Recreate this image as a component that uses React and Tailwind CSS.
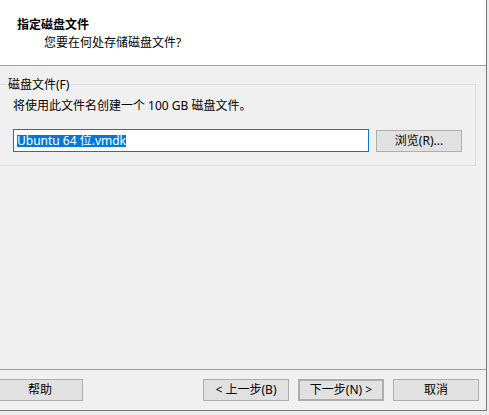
export default function App() {
  const font = "font-['Segoe_UI','Noto_Sans','Noto_Sans_CJK_SC',sans-serif]";
  const btn =
    "h-[22px] w-[86px] flex items-center justify-center bg-[#e1e1e1] border border-[#adadad] text-[12px] leading-[16px] text-black";
  return (
    <div className={`w-[489px] h-[415px] bg-[#ececec] overflow-hidden ${font}`}>
      <div className="w-[487px] h-[411px] border-r border-b border-[#7a7a7a] bg-[#f0f0f0] flex flex-col">
        <div className="h-[66px] bg-white border-b border-[#a0a0a0] pt-[16px] shrink-0">
          <div className="pl-[17px] text-[12px] leading-[16px] font-bold text-black font-['Noto_Sans_CJK_SC',sans-serif]">
            指定磁盘文件
          </div>
          <div className="pl-[44px] mt-[3px] text-[12px] leading-[16px] text-black">
            您要在何处存储磁盘文件?
          </div>
        </div>
        <div className="h-[304px] shrink-0 border-b border-[#a0a0a0]">
          <div className="relative mt-[18px] ml-[-2px] w-[478px] h-[82px] border border-[#dcdcdc] pl-[14px] pt-[13px]">
            <span className="absolute top-[-8px] left-[8px] px-px bg-[#f0f0f0] text-[12px] leading-[16px] text-black">
              磁盘文件(F)
            </span>
            <div className="text-[12px] leading-[16px] text-black">
              将使用此文件名创建一个 100 GB 磁盘文件。
            </div>
            <div className="flex items-center mt-[15px]">
              <div className="w-[356px] h-[23px] bg-white border border-[#0078d7] flex items-center pl-[3px]">
                <span className="bg-[#0078d7] text-white text-[12px] leading-[12px] h-[12px] whitespace-pre">
                  Ubuntu 64 位.vmdk
                </span>
              </div>
              <div className={`${btn} ml-[7px]`}>浏览(R)...</div>
            </div>
          </div>
        </div>
        <div className="flex items-start pt-[9px] pr-[7px]">
          <div className={`${btn} ml-[-3px]`}>帮助</div>
          <div className="ml-auto flex gap-[9px]">
            <div className={btn}>&lt; 上一步(B)</div>
            <div className={`${btn} border-2 border-[#0078d7]`}>下一步(N) &gt;</div>
            <div className={btn}>取消</div>
          </div>
        </div>
      </div>
    </div>
  );
}
